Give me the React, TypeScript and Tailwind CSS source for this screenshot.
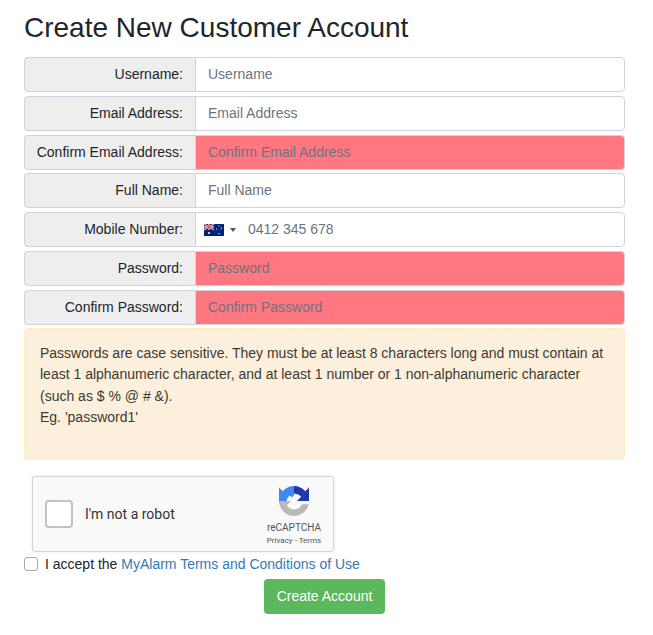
const fieldClass =
  "w-full h-full min-w-0 rounded-r border border-[#ced4da] bg-white px-3 pb-[1px] text-[14px] text-[#495057] outline-none placeholder:text-[#6c757d]";
const errorClass =
  "w-full h-full min-w-0 rounded-r border border-[#ced4da] bg-[#ff7781] px-3 pb-[1px] text-[14px] text-[#495057] outline-none placeholder:text-[#6c757d]";

const AusFlag = () => (
  <svg width="20" height="12" viewBox="0 0 20 12" className="block">
    <rect width="20" height="12" fill="#00247d" />
    <path d="M0 0 10 6M10 0 0 6" stroke="#fff" strokeWidth="1.4" />
    <path d="M0 0 10 6M10 0 0 6" stroke="#cf1b2b" strokeWidth="0.6" />
    <path d="M5 0V6M0 3H10" stroke="#fff" strokeWidth="2" />
    <path d="M5 0V6M0 3H10" stroke="#cf1b2b" strokeWidth="1.1" />
    <circle cx="5" cy="9" r="1" fill="#fff" />
    <circle cx="15" cy="2" r="0.6" fill="#fff" />
    <circle cx="15" cy="9.6" r="0.7" fill="#fff" />
    <circle cx="12.6" cy="5" r="0.6" fill="#fff" />
    <circle cx="17.5" cy="4.2" r="0.6" fill="#fff" />
    <circle cx="16" cy="6" r="0.4" fill="#fff" />
  </svg>
);

const RecaptchaLogo = () => (
  <svg width="32" height="32" viewBox="0 0 32 32" className="block">
    <path d="M16 1C20.5 1 24.5 3 27.3 6.2L31 2.5V16H19L23.2 11.8C21.5 10 19.5 9 16 8.6Z" fill="#1c3aa9" />
    <path d="M16 1C11.5 1 7.5 3 4.7 6.2L1 2.5V16H8.6C9 13.5 10.2 11.8 11.8 10.6L14 12.6L16 10Z" fill="#4285f4" />
    <path d="M1 16H13L8.8 20.2C10.5 22.8 13 24.4 16 24.4C19.8 24.4 22.6 22.4 24 19.2H30.8C29 26 23 31 16 31C8 31 1.3 24.5 1 16Z" fill="#b8b8b8" />
  </svg>
);

const Row = ({ label, children }: { label: string; children: React.ReactNode }) => (
  <div className="flex h-[35px]">
    <label className="flex w-[171px] shrink-0 items-center justify-end rounded-l border border-r-0 border-[#ced4da] bg-[#eeeeee] px-3 text-[14px] whitespace-nowrap text-[#212529]">
      {label}
    </label>
    <div className="min-w-0 flex-1">{children}</div>
  </div>
);

export default function App() {
  return (
    <div className="h-[635px] w-[653px] overflow-hidden bg-white px-6 pt-[11px] font-['Liberation_Sans',Arial,sans-serif] text-[14px] text-[#212529]">
      <h1 className="mb-[12.7px] text-[28px] leading-[33.6px] font-normal">Create New Customer Account</h1>

      <form className="w-[601px]">
        <div className="flex flex-col gap-[3.72px]">
          <Row label="Username:">
            <input className={fieldClass} placeholder="Username" />
          </Row>
          <Row label="Email Address:">
            <input className={fieldClass} placeholder="Email Address" />
          </Row>
          <Row label="Confirm Email Address:">
            <input className={errorClass} placeholder="Confirm Email Address" />
          </Row>
          <Row label="Full Name:">
            <input className={fieldClass} placeholder="Full Name" />
          </Row>
          <Row label="Mobile Number:">
            <div className="flex h-full items-center rounded-r border border-[#ced4da] bg-white pl-2">
              <AusFlag />
              <span className="ml-[6px] h-0 w-0 border-x-[3px] border-t-[4px] border-x-transparent border-t-[#555555]" />
              <input
                className="ml-[12px] h-full min-w-0 flex-1 px-0 pb-[1px] text-[14px] text-[#495057] outline-none placeholder:text-[#6c757d]"
                placeholder="0412 345 678"
              />
            </div>
          </Row>
          <Row label="Password:">
            <input className={errorClass} placeholder="Password" />
          </Row>
          <Row label="Confirm Password:">
            <input className={errorClass} placeholder="Confirm Password" />
          </Row>
        </div>

        <div className="mt-[3.9px] h-[131.65px] rounded border border-[#ffeeba] bg-[#fcefdc] pt-[13.8px] pr-4 pl-[15px] leading-[21.2px] text-[#3d3a32]">
          Passwords are case sensitive. They must be at least 8 characters long and must contain at least 1 alphanumeric
          character, and at least 1 number or 1 non-alphanumeric character (such as $ % @ # &amp;).
          <br />
          Eg. 'password1'
        </div>

        <div className="mt-4 ml-2 flex h-[76px] w-[302px] items-center rounded-[3px] border border-[#d3d3d3] bg-[#f9f9f9] shadow-[0_0_4px_rgba(0,0,0,0.08)]">
          <span className="ml-3 h-7 w-7 shrink-0 rounded-sm border-2 border-[#c1c1c1] bg-white" />
          <span className="ml-3 flex-1 font-['Roboto',sans-serif] text-[14px] text-[#333333]">I'm not a robot</span>
          <div className="mr-[11px] flex w-[56px] flex-col items-center pt-[2px] font-['Roboto',sans-serif] text-[#555555]">
            <RecaptchaLogo />
            <span className="mt-[5px] text-[10px] leading-[12px]">reCAPTCHA</span>
            <span className="mt-[2px] text-[8px] leading-[10px] whitespace-nowrap">Privacy - Terms</span>
          </div>
        </div>

        <label className="mt-[1px] flex h-[22px] items-center">
          <span className="h-[14px] w-[14px] shrink-0 rounded-[3px] border border-[#a8a8a8] bg-white" />
          <span className="ml-[7px]">
            I accept the <a className="text-[#337ab7]">MyAlarm Terms and Conditions of Use</a>
          </span>
        </label>

        <div className="mt-[4px] flex justify-center">
          <button type="button" className="h-[35px] rounded bg-[#5cb85c] px-[13px] text-[14px] text-white">
            Create Account
          </button>
        </div>
      </form>
    </div>
  );
}
